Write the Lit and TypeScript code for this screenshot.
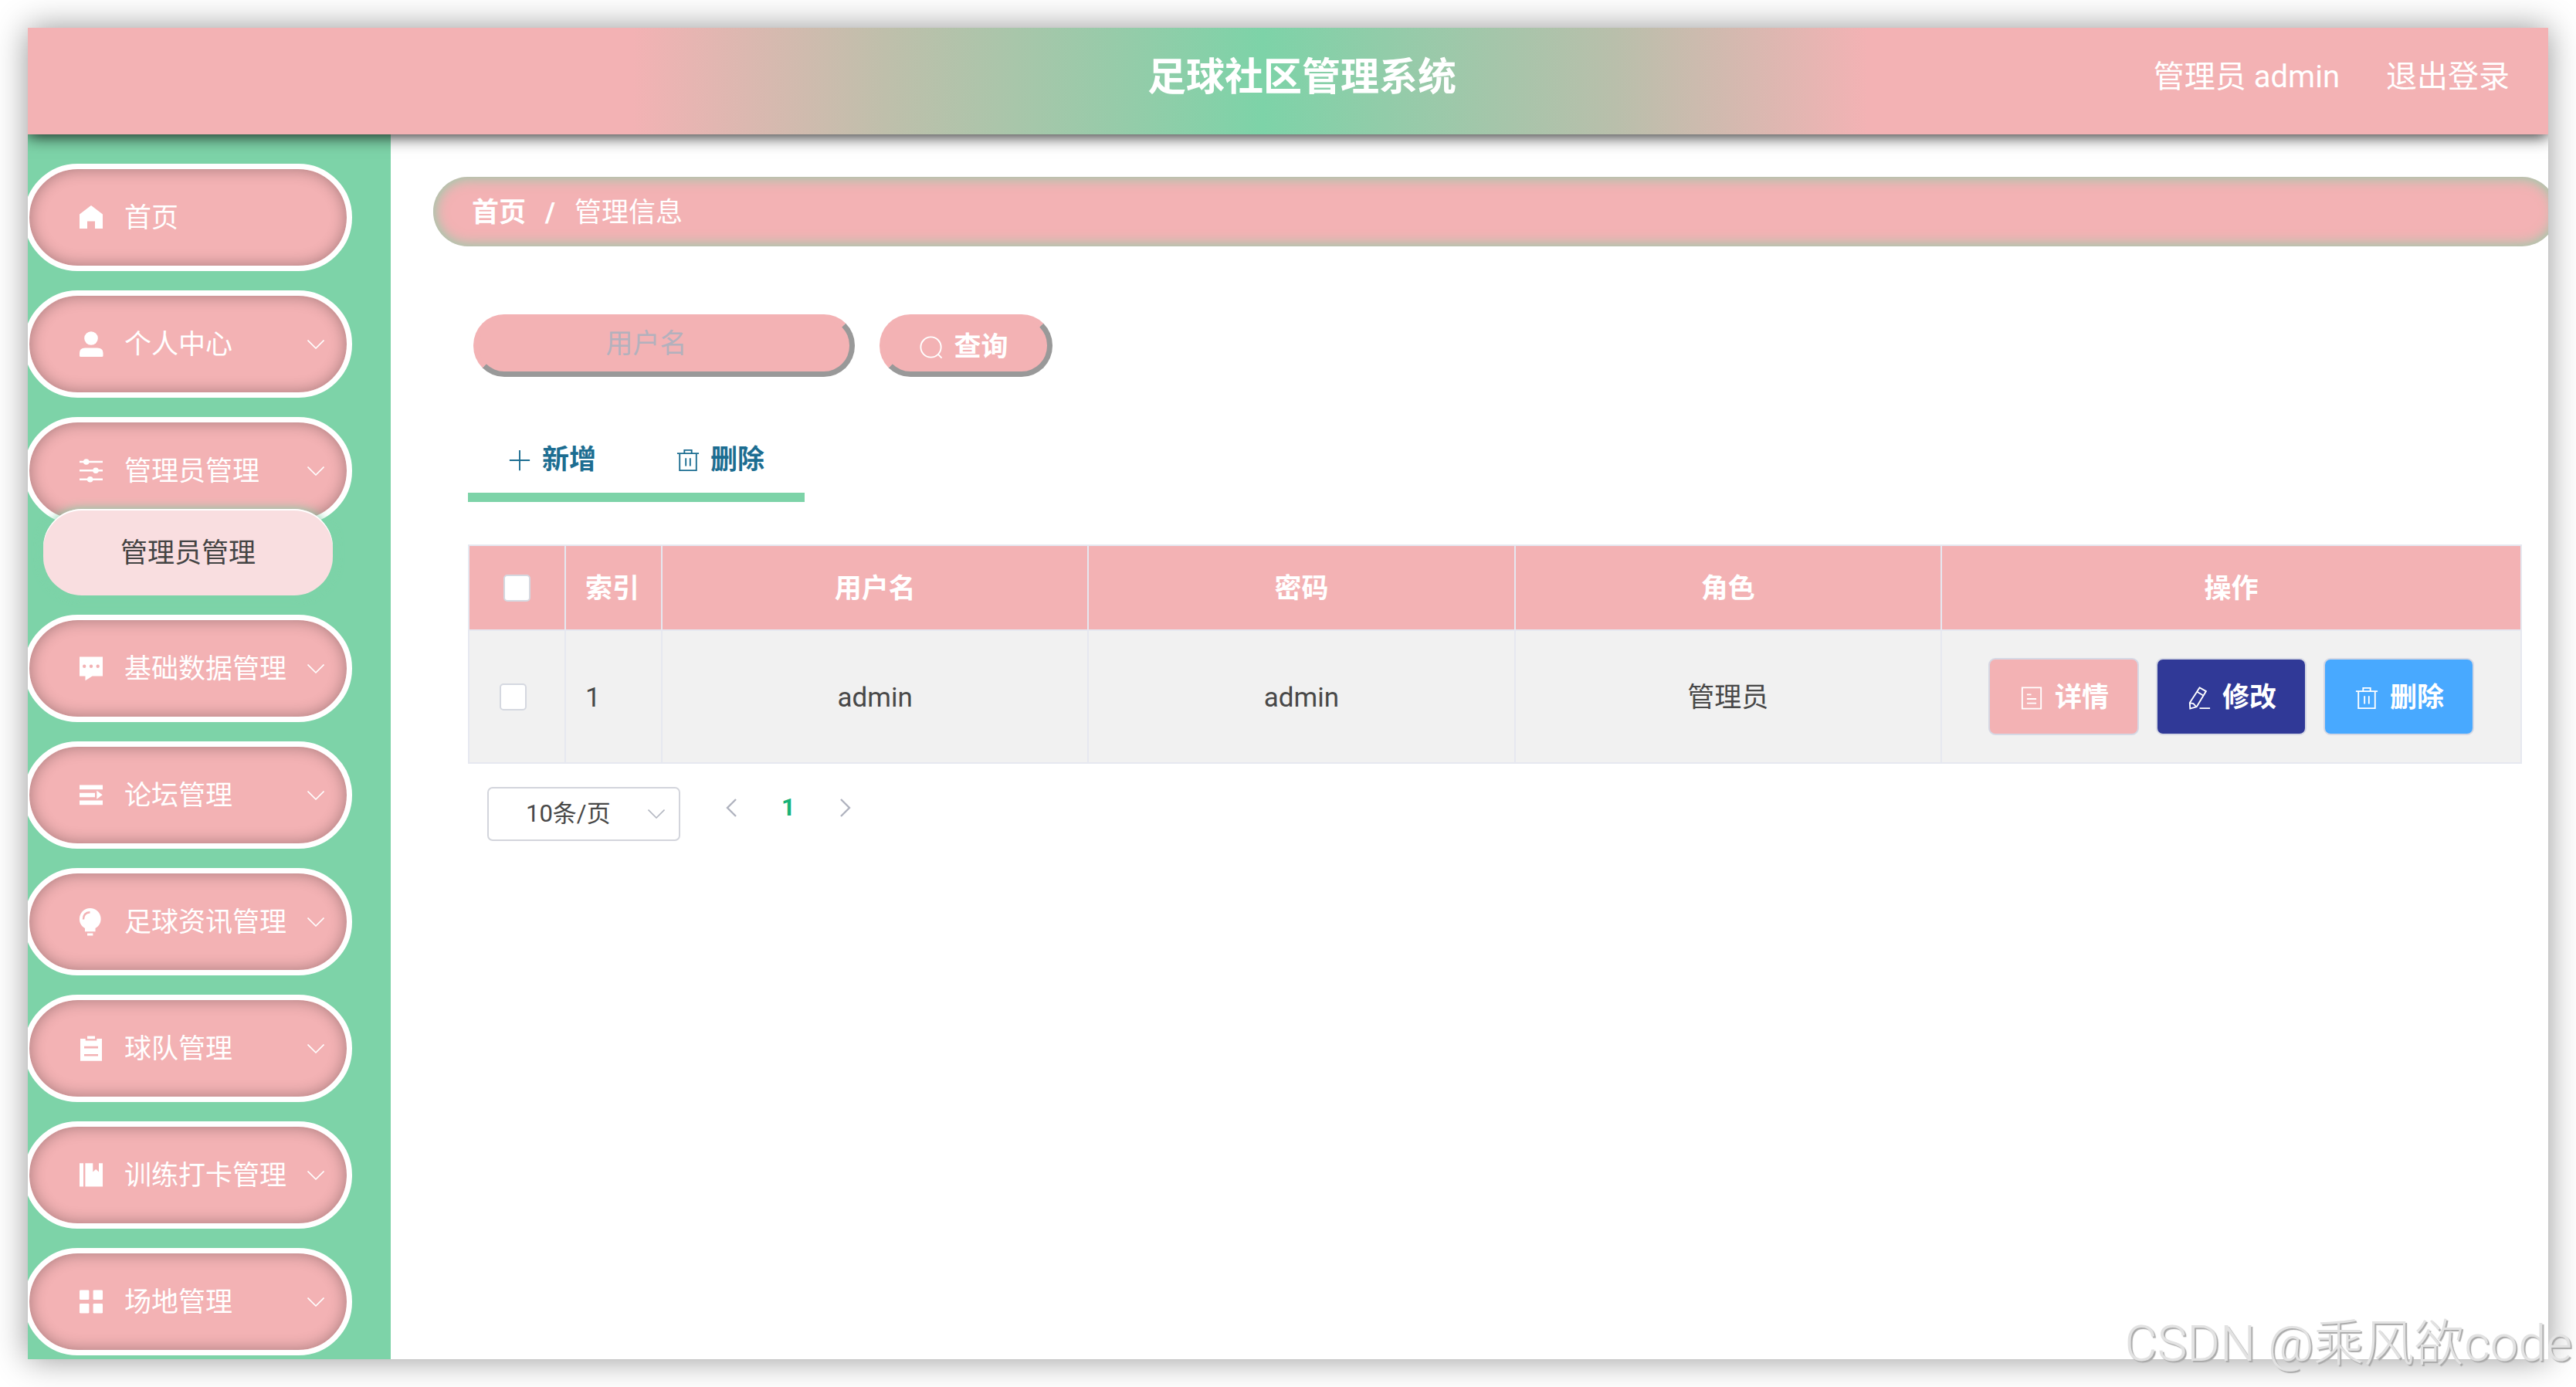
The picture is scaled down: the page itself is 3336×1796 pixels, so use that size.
import { LitElement, html, css, svg, nothing } from "lit";
import { customElement, state } from "lit/decorators.js";

interface MenuItem {
  label: string;
  icon: string;
  children?: string[];
}

interface Admin {
  id: number;
  username: string;
  password: string;
  role: string;
}

const MENU: MenuItem[] = [
  { label: "首页", icon: "home" },
  { label: "个人中心", icon: "user", children: [] },
  { label: "管理员管理", icon: "sliders", children: ["管理员管理"] },
  { label: "基础数据管理", icon: "chat", children: [] },
  { label: "论坛管理", icon: "list", children: [] },
  { label: "足球资讯管理", icon: "bulb", children: [] },
  { label: "球队管理", icon: "clipboard", children: [] },
  { label: "训练打卡管理", icon: "book", children: [] },
  { label: "场地管理", icon: "grid", children: [] },
];

const ADMINS: Admin[] = [
  { id: 1, username: "admin", password: "admin", role: "管理员" },
];

// Solid glyphs of the side menu, drawn on a 34 x 34 grid.
const menuGlyphs: Record<string, unknown> = {
  home: svg`<path d="M17 1 L32 12.5 V31 H22 V21.5 H12 V31 H2 V12.5 Z"/>`,
  user: svg`<circle cx="17" cy="9" r="8.8"/><path d="M2 31.500 V28 Q2 21.500 9 21.500 H25 Q32.500 21.500 32.500 28 V31.500 Q32.500 33 31 33 H3.500 Q2 33 2 31.500 Z"/>`,
  sliders: svg`<path d="M2 3.700 H32 V6.300 H2 Z M2 15 H32 V17.600 H2 Z M2 26.500 H32 V29.100 H2 Z"/><circle cx="10.700" cy="5" r="3.800"/><circle cx="23" cy="16.300" r="3.800"/><circle cx="15.700" cy="27.800" r="3.800"/>`,
  chat: svg`<path fill-rule="evenodd" d="M2 1.500 H32 V26.500 H18.500 L9.500 32.300 V26.500 H2 Z M6 13.800 a2.200 2.200 0 1 0 4.400 0 a2.200 2.200 0 1 0 -4.400 0 Z M14.800 13.800 a2.200 2.200 0 1 0 4.400 0 a2.200 2.200 0 1 0 -4.400 0 Z M23.500 13.800 a2.200 2.200 0 1 0 4.400 0 a2.200 2.200 0 1 0 -4.400 0 Z"/>`,
  list: svg`<path d="M2 3.500 H32 V9.200 H2 Z M2 13.800 H22 V19.200 H2 Z M2 23.500 H32 V29.200 H2 Z M24.300 10.800 L31.700 16.300 L24.300 21.700 Z"/>`,
  bulb: svg`<path d="M15.700 -1 A13.900 13.900 0 0 1 29.600 12.900 C29.600 18.500 26.500 22.500 22.500 25 V29.300 H9 V25 C5 22.500 1.900 18.500 1.900 12.900 A13.900 13.900 0 0 1 15.700 -1 Z M12 31.400 H19.400 V34.400 H12 Z"/><path class="cut" d="M7 13.500 Q7 4.800 15.500 4.300"/>`,
  clipboard: svg`<path fill-rule="evenodd" d="M3 4 H9.700 V6.600 H24.300 V4 H31 V32.700 H3 Z M8 13.800 V16.500 H26 V13.800 Z M8 24 V26.600 H26 V24 Z"/><path d="M12 0.600 H22 V4.200 H12 Z"/>`,
  book: svg`<path d="M2 1.300 H7 V31.600 H2 Z M9.400 1.300 H19.300 V12.600 L23.100 9 L27 12.600 V1.300 H32 V31.600 H9.400 Z"/>`,
  grid: svg`<rect x="2" y="1.500" width="12.400" height="12.600" rx="1.300"/><rect x="19.600" y="1.500" width="12.400" height="12.600" rx="1.300"/><rect x="2" y="19" width="12.400" height="12.600" rx="1.300"/><rect x="19.600" y="19" width="12.400" height="12.600" rx="1.300"/>`,
};

// Thin outline icons used inside buttons, drawn on a 32 x 32 grid.
const lineGlyphs: Record<string, unknown> = {
  search: svg`<circle cx="15.500" cy="15.500" r="14"/><path d="M25.500 25.500 L30.500 30.500"/>`,
  plus: svg`<path d="M16 2 V30 M2 16 H30"/>`,
  trash: svg`<path d="M1 6.500 H31 M11 6 V2 H21 V6 M4.500 6.500 V30 H27.500 V6.500 M13 13 V24 M19 13 V24"/>`,
  document: svg`<path d="M3 1.500 H29 V30.500 H3 Z M9.500 11 H15.500 M9.500 17 H22.500 M9.500 23 H22.500"/>`,
  edit: svg`<path d="M16.500 1.500 L25.500 6.500 L12.500 28 L3.500 30.500 L3 22.500 Z M13.500 7.500 L22 12.500 M3 22.500 L8 23.500 L12 28 M16.500 30 H31"/>`,
};

const lineIcon = (name: string) => html`<svg
  class="line-icon"
  viewBox="0 0 32 32"
  aria-hidden="true"
>
  ${lineGlyphs[name]}
</svg>`;

@customElement("side-menu")
class SideMenu extends LitElement {
  @state() private open = "管理员管理";

  static styles = css`
    :host {
      display: block;
      padding: 38px 0 5px;
      background: #7dd3a8;
    }
    ul {
      list-style: none;
      margin: 0;
      padding: 0;
    }
    .menu {
      display: flex;
      flex-direction: column;
      gap: 25px;
      margin-left: -5px;
    }
    .item {
      display: flex;
      align-items: center;
      gap: 26px;
      box-sizing: border-box;
      width: 425px;
      height: 139px;
      padding: 0 29px 0 63px;
      border: 7px solid #fff;
      border-radius: 70px;
      background: #f3b2b4;
      box-shadow: inset 0 0 20px rgba(0, 0, 0, 0.32);
      color: #fff;
      font: inherit;
      text-align: left;
      cursor: pointer;
    }
    .label {
      flex: 1;
      padding-top: 3px;
      white-space: nowrap;
    }
    .glyph {
      flex: none;
      width: 34px;
      height: 34px;
      overflow: visible;
      fill: currentColor;
    }
    .cut {
      fill: none;
      stroke: #f3b2b4;
      stroke-width: 2.4;
    }
    .chevron {
      flex: none;
      width: 22px;
      height: 12px;
      fill: none;
      stroke: currentColor;
      stroke-width: 1.6;
    }
    .submenu {
      position: relative;
      margin: -20px 0 0 25px;
    }
    .sub {
      display: flex;
      align-items: center;
      justify-content: center;
      box-sizing: border-box;
      width: 375px;
      height: 112px;
      padding-top: 4px;
      border-radius: 50px;
      background: #f9dee0;
      box-shadow: inset 0 2px 0 #fff, 0 0 14px #7dd3a8;
      color: #444;
      text-decoration: none;
    }
  `;

  private toggle(item: MenuItem) {
    if (item.children?.length) this.open = this.open === item.label ? "" : item.label;
  }

  render() {
    return html`<nav>
      <ul class="menu">
        ${MENU.map(
          (item) => html`<li>
            <button class="item" type="button" @click=${() => this.toggle(item)}>
              <svg class="glyph" viewBox="0 0 34 34" aria-hidden="true">
                ${menuGlyphs[item.icon]}
              </svg>
              <span class="label">${item.label}</span>
              ${item.children
                ? html`<svg class="chevron" viewBox="0 0 22 12" aria-hidden="true">
                    <path d="M0.500 0.500 L11 11 L21.500 0.500" />
                  </svg>`
                : nothing}
            </button>
            ${item.children?.length && this.open === item.label
              ? html`<ul class="submenu">
                  ${item.children.map(
                    (child) => html`<li><a class="sub" href="#admins">${child}</a></li>`
                  )}
                </ul>`
              : nothing}
          </li>`
        )}
      </ul>
    </nav>`;
  }
}

@customElement("admin-list")
class AdminList extends LitElement {
  @state() private selected = new Set<number>();

  static styles = css`
    :host {
      display: block;
      min-width: 0;
      padding: 55px 34px 40px 55px;
      background: #fff;
    }
    button,
    input,
    select {
      font: inherit;
    }
    button {
      cursor: pointer;
    }
    .line-icon {
      flex: none;
      width: 30px;
      height: 30px;
      fill: none;
      stroke: currentColor;
      stroke-width: 2;
    }
    .crumbs {
      display: flex;
      align-items: center;
      gap: 25px;
      box-sizing: border-box;
      height: 90px;
      margin-right: -45px;
      padding: 4px 0 0 50px;
      border-radius: 45px;
      background: #f3b2b4;
      box-shadow: inset 0 0 16px 3px rgba(125, 211, 168, 0.75);
      color: #fff;
    }
    .crumbs a {
      color: inherit;
      font-weight: 700;
      text-decoration: none;
    }
    .slash {
      font-weight: 700;
    }
    .search {
      display: flex;
      gap: 32px;
      margin: 88px 0 0 52px;
    }
    .field,
    .query {
      box-sizing: border-box;
      height: 81px;
      border: 7px solid;
      border-color: #f3b2b4 #999 #999 #f3b2b4;
      border-radius: 40px;
      background: #f3b2b4;
      color: #fff;
    }
    .field {
      width: 494px;
      padding: 0 60px 4px 14px;
      outline: 0;
      text-align: center;
    }
    .field::placeholder {
      color: #b3b1bd;
      opacity: 1;
    }
    .query {
      display: flex;
      align-items: center;
      justify-content: center;
      gap: 14px;
      width: 224px;
      padding: 4px 5px 0 0;
      font-weight: 700;
    }
    .actions {
      display: inline-flex;
      margin: 62px 0 0 45px;
      border-bottom: 12px solid #7dd3a8;
    }
    .action {
      display: flex;
      align-items: center;
      justify-content: center;
      gap: 14px;
      width: 218px;
      height: 88px;
      padding: 4px 0 0;
      border: 0;
      background: none;
      color: #1c6d91;
      font-weight: 700;
    }
    .table {
      width: calc(100% - 45px);
      margin: 55px 0 0 45px;
      border-collapse: collapse;
      table-layout: fixed;
    }
    .col-check,
    .col-index {
      width: 125px;
    }
    .col-ops {
      width: 751px;
    }
    th,
    td {
      padding: 0;
      border: 2px solid #e6e8f0;
      text-align: center;
    }
    th {
      height: 108px;
      background: #f3b2b4;
      color: #fff;
      font-weight: 700;
    }
    td {
      height: 170px;
      background: #f1f1f1;
      color: #484848;
    }
    th.cell {
      height: 105px;
      padding-top: 3px;
    }
    td.cell {
      height: 167px;
      padding-top: 3px;
    }
    .index {
      padding-left: 25px;
      text-align: left;
    }
    td.check {
      padding-right: 10px;
    }
    .box {
      display: block;
      appearance: none;
      box-sizing: border-box;
      width: 35px;
      height: 35px;
      margin: 0 auto;
      border: 2px solid #d5d8e0;
      border-radius: 5px;
      background: #fff;
    }
    .box:checked {
      background: #7dd3a8;
    }
    .ops {
      display: flex;
      justify-content: center;
      gap: 22px;
    }
    .op {
      display: flex;
      align-items: center;
      justify-content: center;
      gap: 15px;
      box-sizing: border-box;
      width: 195px;
      height: 100px;
      padding: 3px 0 0 2px;
      border: 2px solid #d5d8e4;
      border-radius: 9px;
      color: #fff;
      font-weight: 700;
    }
    .op.detail {
      background: #f3b2b4;
    }
    .op.edit {
      background: #303997;
    }
    .op.remove {
      background: #48a9ff;
    }
    .pager {
      display: flex;
      align-items: flex-start;
      margin: 30px 0 0 70px;
      font-size: 31px;
    }
    .size {
      display: grid;
      align-items: center;
      width: 250px;
      margin-right: 29px;
    }
    .size select,
    .size svg {
      grid-area: 1 / 1;
    }
    .size select {
      appearance: none;
      box-sizing: border-box;
      width: 100%;
      height: 70px;
      padding: 0 0 0 48px;
      border: 2px solid #d3d5dc;
      border-radius: 7px;
      background: #fff;
      color: #484848;
    }
    .size svg {
      justify-self: end;
      width: 22px;
      height: 12px;
      margin-right: 20px;
      fill: none;
      stroke: #b4b8c2;
      stroke-width: 1.6;
      pointer-events: none;
    }
    .page {
      display: flex;
      align-items: center;
      justify-content: center;
      width: 74px;
      height: 54px;
      padding: 0;
      border: 0;
      background: none;
      color: #b0b3bf;
    }
    .page svg {
      width: 14px;
      height: 24px;
      fill: none;
      stroke: currentColor;
      stroke-width: 2.4;
    }
    .page.current {
      color: #18b277;
      font-weight: 700;
    }
  `;

  private toggleRow(id: number, on: boolean) {
    const next = new Set(this.selected);
    if (on) next.add(id);
    else next.delete(id);
    this.selected = next;
  }

  private toggleAll(on: boolean) {
    this.selected = new Set(on ? ADMINS.map((a) => a.id) : []);
  }

  render() {
    return html`
      <nav class="crumbs">
        <a href="#home">首页</a>
        <span class="slash">/</span>
        <span>管理信息</span>
      </nav>
      <form class="search" @submit=${(e: Event) => e.preventDefault()}>
        <input class="field" type="text" placeholder="用户名" aria-label="用户名" />
        <button class="query" type="submit">${lineIcon("search")}查询</button>
      </form>
      <div class="actions">
        <button class="action" type="button">${lineIcon("plus")}新增</button>
        <button class="action" type="button">${lineIcon("trash")}删除</button>
      </div>
      <table class="table">
        <colgroup>
          <col class="col-check" />
          <col class="col-index" />
          <col />
          <col />
          <col />
          <col class="col-ops" />
        </colgroup>
        <thead>
          <tr>
            <th>
              <input
                class="box"
                type="checkbox"
                aria-label="全选"
                .checked=${this.selected.size === ADMINS.length}
                @change=${(e: Event) => this.toggleAll((e.target as HTMLInputElement).checked)}
              />
            </th>
            <th class="cell index">索引</th>
            <th class="cell">用户名</th>
            <th class="cell">密码</th>
            <th class="cell">角色</th>
            <th class="cell">操作</th>
          </tr>
        </thead>
        <tbody>
          ${ADMINS.map(
            (a) => html`<tr>
              <td class="check">
                <input
                  class="box"
                  type="checkbox"
                  aria-label=${a.username}
                  .checked=${this.selected.has(a.id)}
                  @change=${(e: Event) =>
                    this.toggleRow(a.id, (e.target as HTMLInputElement).checked)}
                />
              </td>
              <td class="cell index">${a.id}</td>
              <td class="cell">${a.username}</td>
              <td class="cell">${a.password}</td>
              <td class="cell">${a.role}</td>
              <td>
                <div class="ops">
                  <button class="op detail" type="button">${lineIcon("document")}详情</button>
                  <button class="op edit" type="button">${lineIcon("edit")}修改</button>
                  <button class="op remove" type="button">${lineIcon("trash")}删除</button>
                </div>
              </td>
            </tr>`
          )}
        </tbody>
      </table>
      <div class="pager">
        <div class="size">
          <select aria-label="每页条数">
            <option>10条/页</option>
          </select>
          <svg viewBox="0 0 22 12" aria-hidden="true">
            <path d="M0.500 0.500 L11 11 L21.500 0.500" />
          </svg>
        </div>
        <button class="page" type="button" aria-label="上一页">
          <svg viewBox="0 0 14 24" aria-hidden="true"><path d="M13 1 L2 12 L13 23" /></svg>
        </button>
        <button class="page current" type="button">1</button>
        <button class="page" type="button" aria-label="下一页">
          <svg viewBox="0 0 14 24" aria-hidden="true"><path d="M1 1 L12 12 L1 23" /></svg>
        </button>
      </div>
    `;
  }
}

@customElement("app-root")
class AppRoot extends LitElement {
  static styles = css`
    :host {
      display: flex;
      position: relative;
      box-sizing: border-box;
      min-height: 100vh;
      padding: 36px;
      overflow: hidden;
      background: #fff;
      font-family: Roboto, "Noto Sans CJK SC", sans-serif;
      font-size: 35px;
      line-height: 50px;
    }
    .window {
      display: flex;
      flex: 1;
      flex-direction: column;
      min-width: 0;
      box-shadow: 0 0 40px rgba(0, 0, 0, 0.42);
    }
    .header {
      display: grid;
      grid-template-columns: 1fr auto 1fr;
      align-items: center;
      position: relative;
      z-index: 1;
      box-sizing: border-box;
      height: 138px;
      padding: 0 50px 10px 86px;
      background: linear-gradient(
        90deg,
        #f3b2b4 24%,
        #bfbfab 34%,
        #7dd3a8 49%,
        #b9bfab 63%,
        #f3b2b4 73%
      );
      box-shadow: 0 2px 20px rgba(0, 0, 0, 0.9);
      clip-path: inset(0 0 -40px 0);
      color: #fff;
    }
    .title {
      grid-column: 2;
      margin: 0;
      font-size: 50px;
      font-weight: 700;
    }
    .account {
      display: flex;
      justify-content: flex-end;
      gap: 60px;
      font-size: 40px;
    }
    .account a {
      color: inherit;
      text-decoration: none;
    }
    .body {
      display: grid;
      flex: 1;
      grid-template-columns: 470px minmax(0, 1fr);
      overflow: hidden;
    }
    .watermark {
      position: absolute;
      right: 5px;
      bottom: 14px;
      color: #e2e2e2;
      font-size: 65px;
      font-weight: 300;
      line-height: 84px;
      text-shadow: 2px 2px 1px #aaa;
      white-space: nowrap;
      z-index: 2;
    }
  `;

  render() {
    return html`
      <div class="window">
        <header class="header">
          <h1 class="title">足球社区管理系统</h1>
          <div class="account">
            <span>管理员 admin</span>
            <a href="#logout">退出登录</a>
          </div>
        </header>
        <div class="body">
          <side-menu></side-menu>
          <admin-list></admin-list>
        </div>
      </div>
      <div class="watermark">CSDN @乘风欲code</div>
    `;
  }
}
